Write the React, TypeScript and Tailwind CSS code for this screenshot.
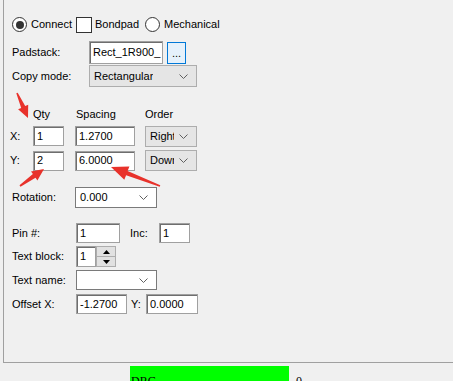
import React from "react";

const font = { fontFamily: '"Liberation Sans", Arial, sans-serif' };

function Chevron() {
  return (
    <svg width="9" height="5" viewBox="0 0 9 5" className="shrink-0">
      <polyline points="0.5,0.5 4.5,4.5 8.5,0.5" fill="none" stroke="#606060" strokeWidth="1" />
    </svg>
  );
}

function Input({ w, h = 20, value }: { w: number; h?: number; value: string }) {
  return (
    <div
      className="bg-white border border-[#a0a0a0] shadow-[inset_1px_1px_0_#6e6e6e] flex items-center pl-[3px] text-[11px] text-black overflow-hidden whitespace-nowrap shrink-0"
      style={{ width: w, height: h }}
    >
      {value}
    </div>
  );
}

function GraySelect({ w, h = 21, value, textW }: { w: number; h?: number; value: string; textW?: number }) {
  return (
    <div
      className="bg-[#e5e5e5] border border-[#adadad] flex items-center pl-[4px] pr-[8px] text-[11px] text-black shrink-0"
      style={{ width: w, height: h }}
    >
      <div className="overflow-hidden whitespace-nowrap shrink-0" style={textW ? { width: textW } : undefined}>
        {value}
      </div>
      <div className="flex-1" />
      <Chevron />
    </div>
  );
}

function WhiteSelect({ w, h = 21, value }: { w: number; h?: number; value: string }) {
  return (
    <div
      className="bg-white border border-[#7a7a7a] flex items-center pl-[4px] pr-[8px] text-[11px] text-black shrink-0"
      style={{ width: w, height: h }}
    >
      <div className="flex-1 whitespace-nowrap">{value}</div>
      <Chevron />
    </div>
  );
}

function arrowPoints(tx: number, ty: number, hx: number, hy: number, headLen: number, headW: number) {
  const dx = hx - tx;
  const dy = hy - ty;
  const len = Math.hypot(dx, dy);
  const ux = dx / len;
  const uy = dy / len;
  const nx = -uy;
  const ny = ux;
  const bx = hx - ux * headLen;
  const by = hy - uy * headLen;
  const w0 = 0.8;
  const w1 = 2.2;
  const pts = [
    [tx + nx * w0, ty + ny * w0],
    [bx + nx * w1, by + ny * w1],
    [bx + nx * headW, by + ny * headW],
    [hx, hy],
    [bx - nx * headW, by - ny * headW],
    [bx - nx * w1, by - ny * w1],
    [tx - nx * w0, ty - ny * w0],
  ];
  return pts.map((p) => `${p[0].toFixed(1)},${p[1].toFixed(1)}`).join(" ");
}

export default function App() {
  return (
    <div className="relative w-[453px] h-[381px] bg-[#f0f0f0] overflow-hidden text-black" style={font}>
      <div className="ml-[3px] w-[450px] h-[363px] border-l border-b border-[#a0a0a0] flex flex-col text-[11px]">
        {/* radio row */}
        <div className="mt-[16px] h-[17px] flex items-center pl-[8px]">
          <div className="w-[15px] h-[15px] rounded-full border border-[#333] bg-white flex items-center justify-center shrink-0">
            <div className="w-[8px] h-[8px] rounded-full bg-[#333]" />
          </div>
          <span className="ml-[4px] w-[45px]">Connect</span>
          <div className="w-[16px] h-[16px] border border-[#333] bg-white shrink-0" />
          <span className="ml-[3px] w-[50px]">Bondpad</span>
          <div className="w-[15px] h-[15px] rounded-full border border-[#333] bg-white shrink-0" />
          <span className="ml-[4px]">Mechanical</span>
        </div>

        {/* padstack */}
        <div className="mt-[8px] h-[23px] flex items-center pl-[8px]">
          <span className="w-[77px]">Padstack:</span>
          <Input w={74} h={23} value="Rect_1R900_" />
          <div className="ml-[4px] w-[19px] h-[22px] bg-[#e5f1fb] border border-[#0078d7] flex items-end justify-center pb-[4px] text-[11px] leading-none">
            ...
          </div>
        </div>

        {/* copy mode */}
        <div className="mt-[1px] h-[22px] flex items-center pl-[8px]">
          <span className="w-[77px]">Copy mode:</span>
          <GraySelect w={108} h={22} value="Rectangular" />
        </div>

        {/* headers */}
        <div className="mt-[20px] h-[14px] flex items-center">
          <span className="ml-[29px] w-[43px]">Qty</span>
          <span className="w-[69px]">Spacing</span>
          <span>Order</span>
        </div>

        {/* X row */}
        <div className="mt-[5px] h-[20px] flex items-center">
          <span className="ml-[6px] w-[23px]">X:</span>
          <Input w={31} value="1" />
          <div className="w-[11px]" />
          <Input w={60} value="1.2700" />
          <div className="w-[10px]" />
          <GraySelect w={52} value="Right" textW={24} />
        </div>

        {/* Y row */}
        <div className="mt-[4px] h-[21px] flex items-center">
          <span className="ml-[6px] w-[23px]">Y:</span>
          <Input w={31} value="2" />
          <div className="w-[11px]" />
          <Input w={60} value="6.0000" />
          <div className="w-[10px]" />
          <GraySelect w={52} value="Down" textW={24} />
        </div>

        {/* rotation */}
        <div className="mt-[16px] h-[21px] flex items-center pl-[8px]">
          <span className="w-[63px]">Rotation:</span>
          <WhiteSelect w={82} value="0.000" />
        </div>

        {/* pin */}
        <div className="mt-[15px] h-[20px] flex items-center pl-[8px]">
          <span className="w-[64px]">Pin #:</span>
          <Input w={44} value="1" />
          <span className="ml-[10px] w-[29px]">Inc:</span>
          <Input w={31} value="1" />
        </div>

        {/* text block */}
        <div className="mt-[3px] h-[21px] flex items-center pl-[8px]">
          <span className="w-[64px]">Text block:</span>
          <Input w={20} h={21} value="1" />
          <div className="w-[20px] h-[21px] flex flex-col shrink-0">
            <div className="h-[11px] bg-[#e1e1e1] border border-[#adadad] flex items-center justify-center">
              <svg width="7" height="4" viewBox="0 0 7 4">
                <polygon points="0,4 3.5,0 7,4" fill="#000" />
              </svg>
            </div>
            <div className="h-[10px] bg-[#e1e1e1] border border-t-0 border-[#adadad] flex items-center justify-center">
              <svg width="7" height="4" viewBox="0 0 7 4">
                <polygon points="0,0 3.5,4 7,0" fill="#000" />
              </svg>
            </div>
          </div>
        </div>

        {/* text name */}
        <div className="mt-[3px] h-[20px] flex items-center pl-[8px]">
          <span className="w-[64px]">Text name:</span>
          <WhiteSelect w={81} h={20} value="" />
        </div>

        {/* offset */}
        <div className="mt-[4px] h-[20px] flex items-center pl-[8px]">
          <span className="w-[64px]">Offset X:</span>
          <Input w={51} value="-1.2700" />
          <span className="ml-[4px] w-[15px]">Y:</span>
          <Input w={52} value="0.0000" />
        </div>
      </div>

      {/* DRC status */}
      <div className="mt-[3px] flex items-start">
        <div
          className="ml-[130px] w-[159px] h-[20px] bg-[#00ff00] pl-[1px] pt-[9px] text-[12px] leading-none text-black"
          style={{ fontFamily: '"Liberation Serif", "Times New Roman", serif' }}
        >
          DRC
        </div>
        <span
          className="ml-[7px] pt-[9px] text-[12px] leading-none"
          style={{ fontFamily: '"Liberation Serif", "Times New Roman", serif' }}
        >
          0
        </span>
      </div>

      {/* annotation arrows */}
      <svg className="absolute left-0 top-0 pointer-events-none" width="453" height="381">
        <polygon points={arrowPoints(17, 93, 28, 118, 12, 5.5)} fill="#e8322b" />
        <polygon points={arrowPoints(20, 186, 44, 169, 12, 5.5)} fill="#e8322b" />
        <polygon points={arrowPoints(160, 186, 111, 167, 17, 7)} fill="#e8322b" />
      </svg>
    </div>
  );
}
